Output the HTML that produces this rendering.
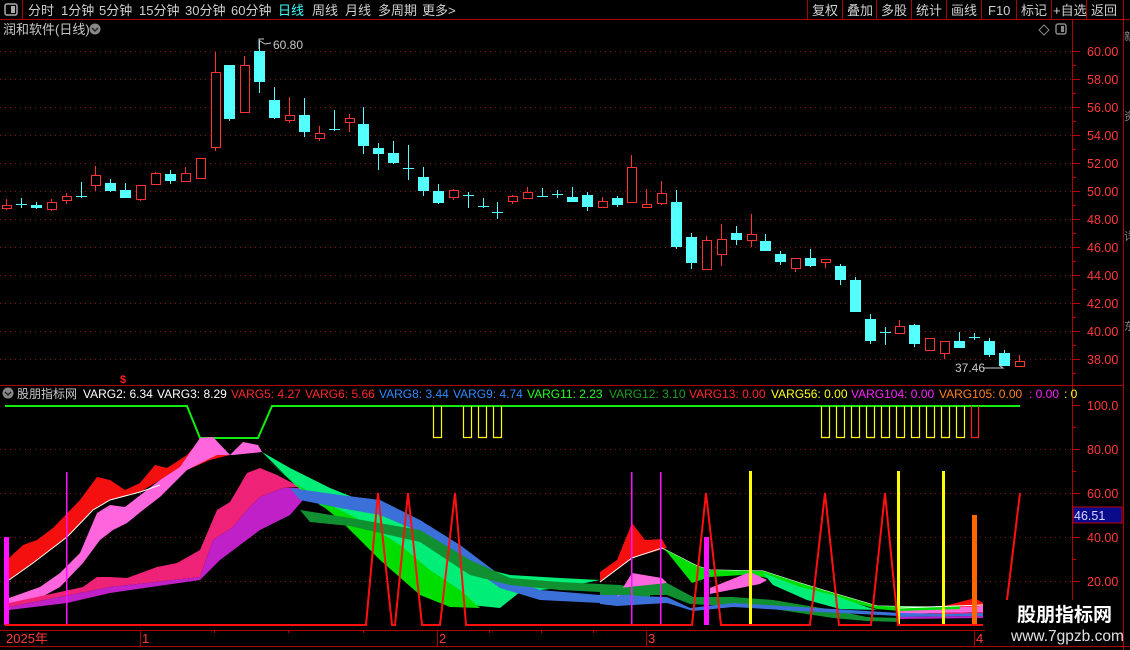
<!DOCTYPE html>
<html><head><meta charset="utf-8"><style>
html,body{margin:0;padding:0;background:#000;width:1130px;height:650px;overflow:hidden}
svg{display:block}
text{font-family:"Liberation Sans","Noto Sans CJK SC",sans-serif}
</style></head><body>
<svg width="1130" height="650" viewBox="0 0 1130 650" xmlns="http://www.w3.org/2000/svg">
<rect width="1130" height="650" fill="#000"/>
<g stroke="#b00000" stroke-width="1" fill="none">
<line x1="0" y1="19.5" x2="1130" y2="19.5"/>
<line x1="22.5" y1="0" x2="22.5" y2="19"/>
<line x1="807.5" y1="0" x2="807.5" y2="19"/><line x1="842.5" y1="0" x2="842.5" y2="19"/>
<line x1="876.5" y1="0" x2="876.5" y2="19"/><line x1="911.5" y1="0" x2="911.5" y2="19"/>
<line x1="946.5" y1="0" x2="946.5" y2="19"/><line x1="981.5" y1="0" x2="981.5" y2="19"/>
<line x1="1016.5" y1="0" x2="1016.5" y2="19"/><line x1="1051.5" y1="0" x2="1051.5" y2="19"/>
<line x1="1086.5" y1="0" x2="1086.5" y2="19"/><line x1="1123.5" y1="0" x2="1123.5" y2="650"/>
<line x1="1072.5" y1="19" x2="1072.5" y2="630"/>
<line x1="0" y1="385.5" x2="1123" y2="385.5"/>
<line x1="0" y1="630.5" x2="1072" y2="630.5"/>
<line x1="0" y1="646.5" x2="1130" y2="646.5"/>
<line x1="140.5" y1="630" x2="140.5" y2="646"/><line x1="437.5" y1="630" x2="437.5" y2="646"/>
<line x1="646.5" y1="630" x2="646.5" y2="646"/><line x1="974.5" y1="630" x2="974.5" y2="646"/>
</g>
<rect x="5" y="4" width="12" height="11" rx="2" fill="none" stroke="#aaa" stroke-width="1.5"/><rect x="11" y="6" width="4" height="7" fill="#aaa"/>
<g font-size="13" fill="#d0d0d0">
<text x="28" y="15">分时</text><text x="61" y="15">1分钟</text><text x="99" y="15">5分钟</text><text x="139" y="15">15分钟</text><text x="185" y="15">30分钟</text><text x="231" y="15">60分钟</text><text x="278" y="15" fill="#40ffff">日线</text><text x="312" y="15">周线</text><text x="345" y="15">月线</text><text x="378" y="15">多周期</text><text x="422" y="15">更多&gt;</text>
<text x="812" y="15">复权</text><text x="847" y="15">叠加</text><text x="881" y="15">多股</text><text x="916" y="15">统计</text><text x="951" y="15">画线</text><text x="988" y="15">F10</text><text x="1021" y="15">标记</text><text x="1053" y="15">+自选</text><text x="1091" y="15">返回</text>
<text x="3" y="34" fill="#c8c8c8">润和软件(日线)</text>
</g>
<circle cx="95" cy="29" r="5.5" fill="#888"/><path d="M92 28l3 3 3-3" stroke="#222" stroke-width="1.5" fill="none"/>
<path d="M1044 25l5 5-5 5-5-5z" fill="none" stroke="#888"/>
<rect x="1056" y="24" width="10" height="10" rx="2" fill="none" stroke="#888" stroke-width="1.5"/><rect x="1061" y="26" width="3" height="6" fill="#888"/>
<g stroke="#801818" stroke-dasharray="1,4">
<line x1="0" y1="51.5" x2="1072" y2="51.5"/><line x1="0" y1="79.5" x2="1072" y2="79.5"/><line x1="0" y1="107.5" x2="1072" y2="107.5"/><line x1="0" y1="135.5" x2="1072" y2="135.5"/><line x1="0" y1="163.5" x2="1072" y2="163.5"/><line x1="0" y1="191.5" x2="1072" y2="191.5"/><line x1="0" y1="219.5" x2="1072" y2="219.5"/><line x1="0" y1="247.5" x2="1072" y2="247.5"/><line x1="0" y1="275.5" x2="1072" y2="275.5"/><line x1="0" y1="303.5" x2="1072" y2="303.5"/><line x1="0" y1="331.5" x2="1072" y2="331.5"/><line x1="0" y1="359.5" x2="1072" y2="359.5"/>
<line x1="0" y1="449.5" x2="1072" y2="449.5"/><line x1="0" y1="493.5" x2="1072" y2="493.5"/><line x1="0" y1="537.5" x2="1072" y2="537.5"/><line x1="0" y1="581.5" x2="1072" y2="581.5"/>
</g>
<g stroke="#c00000">
<path d="M1072 51.5h8M1072 79.5h8M1072 107.5h8M1072 135.5h8M1072 163.5h8M1072 191.5h8M1072 219.5h8M1072 247.5h8M1072 275.5h8M1072 303.5h8M1072 331.5h8M1072 359.5h8M1072 65.5h4M1072 93.5h4M1072 121.5h4M1072 149.5h4M1072 177.5h4M1072 205.5h4M1072 233.5h4M1072 261.5h4M1072 289.5h4M1072 317.5h4M1072 345.5h4M1072 373.5h4"/>
<path d="M1072 405.5h8M1072 449.5h8M1072 493.5h8M1072 537.5h8M1072 581.5h8M1072 427.5h4M1072 471.5h4M1072 515.5h4M1072 559.5h4M1072 603.5h4"/>
</g>
<g font-size="12.5" fill="#ff3a3a">
<text x="1087" y="56">60.00</text><text x="1087" y="84">58.00</text><text x="1087" y="112">56.00</text><text x="1087" y="140">54.00</text><text x="1087" y="168">52.00</text><text x="1087" y="196">50.00</text><text x="1087" y="224">48.00</text><text x="1087" y="252">46.00</text><text x="1087" y="280">44.00</text><text x="1087" y="308">42.00</text><text x="1087" y="336">40.00</text><text x="1087" y="364">38.00</text>
<text x="1087" y="410">100.0</text><text x="1087" y="454">80.00</text><text x="1087" y="498">60.00</text><text x="1087" y="542">40.00</text><text x="1087" y="586">20.00</text>
</g>
<rect x="1073" y="507" width="49" height="16" fill="#0a0a8c" stroke="#c00000"/>
<text x="1074" y="520" font-size="12.5" fill="#d8d8ff">46.51</text>
<g stroke="#ff3232" fill="#000" stroke-width="1">
<path d="M6.5 199V210M51.5 199V211M66.5 193V204M95.5 166V191M140.5 185V201M155.5 172V184M185.5 167V181M200.5 158V178M215.5 52V151M244.5 56V112M289.5 97V123M319.5 126V141M349.5 114V132M453.5 189V200M512.5 195V204M527.5 187V198M602.5 197V208M631.5 155V203M646.5 189V207M661.5 181V205M706.5 236V269M721.5 224V266M751.5 214V247M795.5 258V272M825.5 259V268M899.5 320V333M929.5 338V351M944.5 341V359M1019.5 355V366"/>
<g transform="translate(0.5,0.5)">
<rect x="2" y="205" width="9" height="3"/><rect x="47" y="202" width="9" height="7"/><rect x="62" y="196" width="9" height="4"/><rect x="91" y="175" width="9" height="10"/><rect x="136" y="185" width="9" height="14"/><rect x="151" y="173" width="9" height="11"/><rect x="181" y="173" width="9" height="8"/><rect x="196" y="158" width="9" height="20"/><rect x="211" y="72" width="9" height="75"/><rect x="240" y="65" width="9" height="47"/><rect x="285" y="115" width="9" height="5"/><rect x="315" y="133" width="9" height="5"/><rect x="345" y="118" width="9" height="4"/><rect x="449" y="190" width="9" height="7"/><rect x="508" y="196" width="9" height="5"/><rect x="523" y="192" width="9" height="6"/><rect x="598" y="201" width="9" height="6"/><rect x="627" y="167" width="9" height="35"/><rect x="642" y="204" width="9" height="3"/><rect x="657" y="193" width="9" height="10"/><rect x="702" y="240" width="9" height="29"/><rect x="717" y="239" width="9" height="15"/><rect x="747" y="234" width="9" height="6"/><rect x="791" y="258" width="9" height="10"/><rect x="821" y="259" width="9" height="3"/><rect x="895" y="326" width="9" height="7"/><rect x="925" y="338" width="9" height="12"/><rect x="940" y="341" width="9" height="12"/><rect x="1015" y="361" width="9" height="5"/>
</g>
</g>
<g stroke="#54ffff" fill="#54ffff" stroke-width="1">
<path d="M21.5 198V208M36.5 202V209M81.5 182V198M110.5 179V192M125.5 183V198M170.5 170V184M229.5 65V121M259.5 40V93M274.5 87V119M304.5 98V137M334.5 110V131M363.5 107V154M378.5 143V170M393.5 141V164M408.5 145V180M423.5 167V196M438.5 184V204M468.5 192V208M483.5 198V208M497.5 202V219M542.5 188V197M557.5 190V198M572.5 187V202M587.5 192V211M617.5 196V207M676.5 190V249M691.5 233V269M736.5 226V245M765.5 234V251M780.5 251V265M810.5 249V267M840.5 264V285M855.5 277V312M870.5 314V344M885.5 327V345M914.5 324V347M959.5 332V348M974.5 333V340M989.5 338V357M1004.5 350V366"/>
<path d="M16 204.5h11M76 196.5h11M329 129.5h11M403 168.5h11M463 195.5h11M478 206.5h11M492 212.5h11M537 196.5h11M552 194.5h11M880 332.5h11M969 337.5h11" />
<g stroke="none">
<rect x="31" y="205" width="11" height="3"/><rect x="105" y="183" width="11" height="8"/><rect x="120" y="190" width="11" height="8"/><rect x="165" y="174" width="11" height="7"/><rect x="224" y="65" width="11" height="54"/><rect x="254" y="51" width="11" height="31"/><rect x="269" y="100" width="11" height="18"/><rect x="299" y="115" width="11" height="17"/><rect x="358" y="124" width="11" height="22"/><rect x="373" y="148" width="11" height="6"/><rect x="388" y="153" width="11" height="10"/><rect x="418" y="177" width="11" height="14"/><rect x="433" y="191" width="11" height="12"/><rect x="567" y="197" width="11" height="5"/><rect x="582" y="195" width="11" height="12"/><rect x="612" y="198" width="11" height="7"/><rect x="671" y="202" width="11" height="45"/><rect x="686" y="237" width="11" height="26"/><rect x="731" y="233" width="11" height="7"/><rect x="760" y="241" width="11" height="10"/><rect x="775" y="254" width="11" height="8"/><rect x="805" y="258" width="11" height="8"/><rect x="835" y="266" width="11" height="14"/><rect x="850" y="280" width="11" height="32"/><rect x="865" y="319" width="11" height="22"/><rect x="909" y="325" width="11" height="19"/><rect x="954" y="341" width="11" height="7"/><rect x="984" y="341" width="11" height="14"/><rect x="999" y="353" width="11" height="13"/>
</g>
</g>
<g font-size="12" fill="#c8c8c8">
<path d="M259 49V39h5M260 41l5 3 6-1" stroke="#c8c8c8" fill="none"/>
<text x="273" y="49">60.80</text>
<text x="955" y="372">37.46</text>
<path d="M983 368h20l-4-3" stroke="#c8c8c8" fill="none"/>
</g>
<text x="120" y="383" font-size="11" fill="#ff2020" font-weight="bold">$</text>
<circle cx="8" cy="393" r="5.5" fill="#888"/><path d="M5 392l3 3 3-3" stroke="#222" stroke-width="1.5" fill="none"/>
<g font-size="12">
<text x="17" y="398" fill="#c8c8c8">股朋指标网</text>
<text x="83" y="398" fill="#fff">VARG2: 6.34</text><text x="157" y="398" fill="#fff">VARG3: 8.29</text>
<text x="231" y="398" fill="#ff2828">VARG5: 4.27</text><text x="305" y="398" fill="#ff2828">VARG6: 5.66</text>
<text x="379" y="398" fill="#2e8cff">VARG8: 3.44</text><text x="453" y="398" fill="#2e8cff">VARG9: 4.74</text>
<text x="527" y="398" fill="#20ff20">VARG11: 2.23</text><text x="609" y="398" fill="#1ea01e">VARG12: 3.10</text>
<text x="689" y="398" fill="#ff2828">VARG13: 0.00</text><text x="771" y="398" fill="#ffff20">VARG56: 0.00</text>
<text x="851" y="398" fill="#ff20ff">VARG104: 0.00</text><text x="939" y="398" fill="#ff8020">VARG105: 0.00</text>
<text x="1029" y="398" fill="#ff20ff">: 0.00</text><text x="1064" y="398" fill="#ffff20">: 0</text>
</g>
<path d="M5 406H187L200 438H258L272 406H1020" stroke="#10ee10" stroke-width="2" fill="none"/>
<g stroke="#ffff00" fill="none" stroke-width="1.2">
<path d="M433.5 406V437.5H441.5V406M463.5 406V437.5H471.5V406M478.5 406V437.5H486.5V406M493.5 406V437.5H501.5V406"/>
<path d="M821.5 406V437.5H829.5V406M836.5 406V437.5H844.5V406M851.5 406V437.5H859.5V406M866.5 406V437.5H874.5V406M881.5 406V437.5H889.5V406M896.5 406V437.5H904.5V406M911.5 406V437.5H919.5V406M926.5 406V437.5H934.5V406M941.5 406V437.5H949.5V406M956.5 406V437.5H964.5V406"/>
</g>
<path d="M971.5 406V437.5H978.5V406" stroke="#ff2020" fill="none" stroke-width="1.2"/>
<polygon fill="#f51010" points="9,558 23,545 37,540 53,528 80,500 97,477 110,480 125,490 140,483 155,465 167,468 187,455 200,440 215,455 230,455 210,460 187,470 160,480 140,492 110,500 93,510 67,537 33,563 9,580"/>
<polygon fill="#ff66dd" points="9,598 40,587 60,573 80,553 97,513 110,505 125,507 143,493 160,480 180,467 200,438 213,437 230,455 243,442 258,445 262,452 233,455 217,455 187,470 160,497 143,510 127,523 113,530 100,540 83,563 60,587 40,598 9,605"/>
<polygon fill="#ee2277" points="9,603 83,587 97,577 110,577 127,578 157,567 177,563 200,550 217,510 230,502 247,473 260,468 277,475 300,487 283,488 260,497 247,510 233,527 213,540 200,577 110,587 9,607"/>
<polygon fill="#c020c8" points="9,607 110,587 200,577 213,540 233,527 247,510 260,497 283,488 300,488 310,492 290,515 260,530 220,560 200,580 110,593 67,603 9,610"/>
<polyline fill="none" stroke="#fff" points="9,580 33,563 67,537 93,510 110,500 140,492 160,485"/>
<polygon fill="#00ee77" points="262,452 290,468 330,488 360,500 400,515 440,540 470,565 510,575 560,578 600,580 560,588 520,592 500,608 470,605 440,585 410,560 380,540 350,522 320,505 295,485"/>
<polygon fill="#00dd00" points="262,455 300,488 340,520 380,560 420,595 450,607 480,608 460,590 430,570 400,545 360,520 330,505 290,480"/>
<polygon fill="#3a70d8" points="290,488 340,495 380,500 420,520 460,545 500,575 540,590 600,595 650,590 650,600 600,603 540,600 500,588 460,560 420,532 380,515 340,508 300,500"/>
<polygon fill="#109030" points="300,510 350,518 420,530 470,560 510,578 560,582 620,585 650,590 650,597 600,592 560,590 510,585 470,575 420,542 350,526 310,522"/>
<polygon fill="#f51010" points="600,572 617,560 632,523 645,540 662,539 667,548 632,558 600,582"/>
<polyline fill="none" stroke="#fff" points="600,582 632,558 662,548 697,566 710,570 763,571 800,583 833,593 877,606 933,607"/>
<polygon fill="#00dd00" points="662,548 697,566 710,570 763,571 800,583 833,593 877,606 933,607 900,611 877,609 833,597 800,588 763,577 743,575 710,577 692,583 667,552"/>
<polygon fill="#00ee77" points="763,573 800,587 833,595 867,607 877,610 840,609 807,600 773,585"/>
<polygon fill="#ff66dd" points="617,597 632,573 662,578 667,583 632,588"/>
<polygon fill="#ff66dd" points="710,588 750,572 767,580 760,584 710,594"/>
<polygon fill="#109030" points="600,585 620,588 667,583 693,597 733,597 773,600 833,610 867,617 900,618 900,622 867,621 833,618 767,608 690,604 667,595 620,595 600,595"/>
<polygon fill="#3a70d8" points="600,598 617,600 633,596 667,597 690,608 733,603 800,607 900,613 900,616 800,611 733,607 693,611 667,603 617,606 600,604"/>
<polygon fill="#f51010" points="900,607 940,607 960,602 975,598 983,603 983,608 940,610"/>
<polygon fill="#ff66dd" points="900,610 983,606 983,612 900,614"/>
<polygon fill="#ee2277" points="900,614 983,612 983,615 900,617"/>
<polygon fill="#3a70d8" points="900,613 950,614 983,613 983,616 900,617"/>
<polygon fill="#00dd00" points="900,607 960,606 960,609 900,611"/>
<polyline fill="none" stroke="#fff" points="900,608 983,605"/>
<polyline fill="none" stroke="#c020c8" stroke-width="2" points="900,618 983,617"/>
<rect x="4" y="537" width="5" height="88" fill="#ff10ff"/>
<rect x="66" y="472" width="1.5" height="153" fill="#ff10ff"/>
<rect x="631" y="472" width="1.5" height="153" fill="#ff10ff"/>
<rect x="660" y="472" width="1.5" height="153" fill="#ff10ff"/>
<rect x="704" y="537" width="5" height="88" fill="#ff10ff"/>
<rect x="749" y="471" width="3" height="154" fill="#ffff00"/>
<rect x="897" y="471" width="3" height="154" fill="#ffff00"/>
<rect x="942" y="471" width="3" height="154" fill="#ffff00"/>
<rect x="972" y="515" width="5" height="110" fill="#ff6600"/>
<polyline fill="none" stroke="#ff1010" stroke-width="2" points="5,625 366,625 378,493 392,625 395,625 408,493 422,625 440,625 455,493 466,625 692,625 706,493 721,625 810,625 825,493 839,625 871,625 885,493 898,625 983,625"/>
<polyline fill="none" stroke="#ff1010" stroke-width="2" points="1007,600 1020,493"/>
<g font-size="13" fill="#ff3a3a">
<text x="6" y="643">2025年</text><text x="142" y="643">1</text><text x="439" y="643">2</text><text x="648" y="643">3</text><text x="976" y="643">4</text>
</g>
<g stroke="#c00000"><path d="M214.5 630v3M288.5 630v3M363.5 630v3M489.5 630v3M541.5 630v3M593.5 630v3"/></g>
<rect x="985" y="600" width="138" height="46" fill="#000"/>
<text x="1017" y="621" font-size="19" font-weight="bold" fill="#fff">股朋指标网</text>
<text x="1011" y="641" font-size="15.5" fill="#e0e0e0">www.7gpzb.com</text>
<g font-size="11" fill="#888"><text x="1124" y="40">新</text><text x="1124" y="120">资</text><text x="1124" y="240">详</text><text x="1124" y="330">东</text></g>
</svg>
</body></html>
